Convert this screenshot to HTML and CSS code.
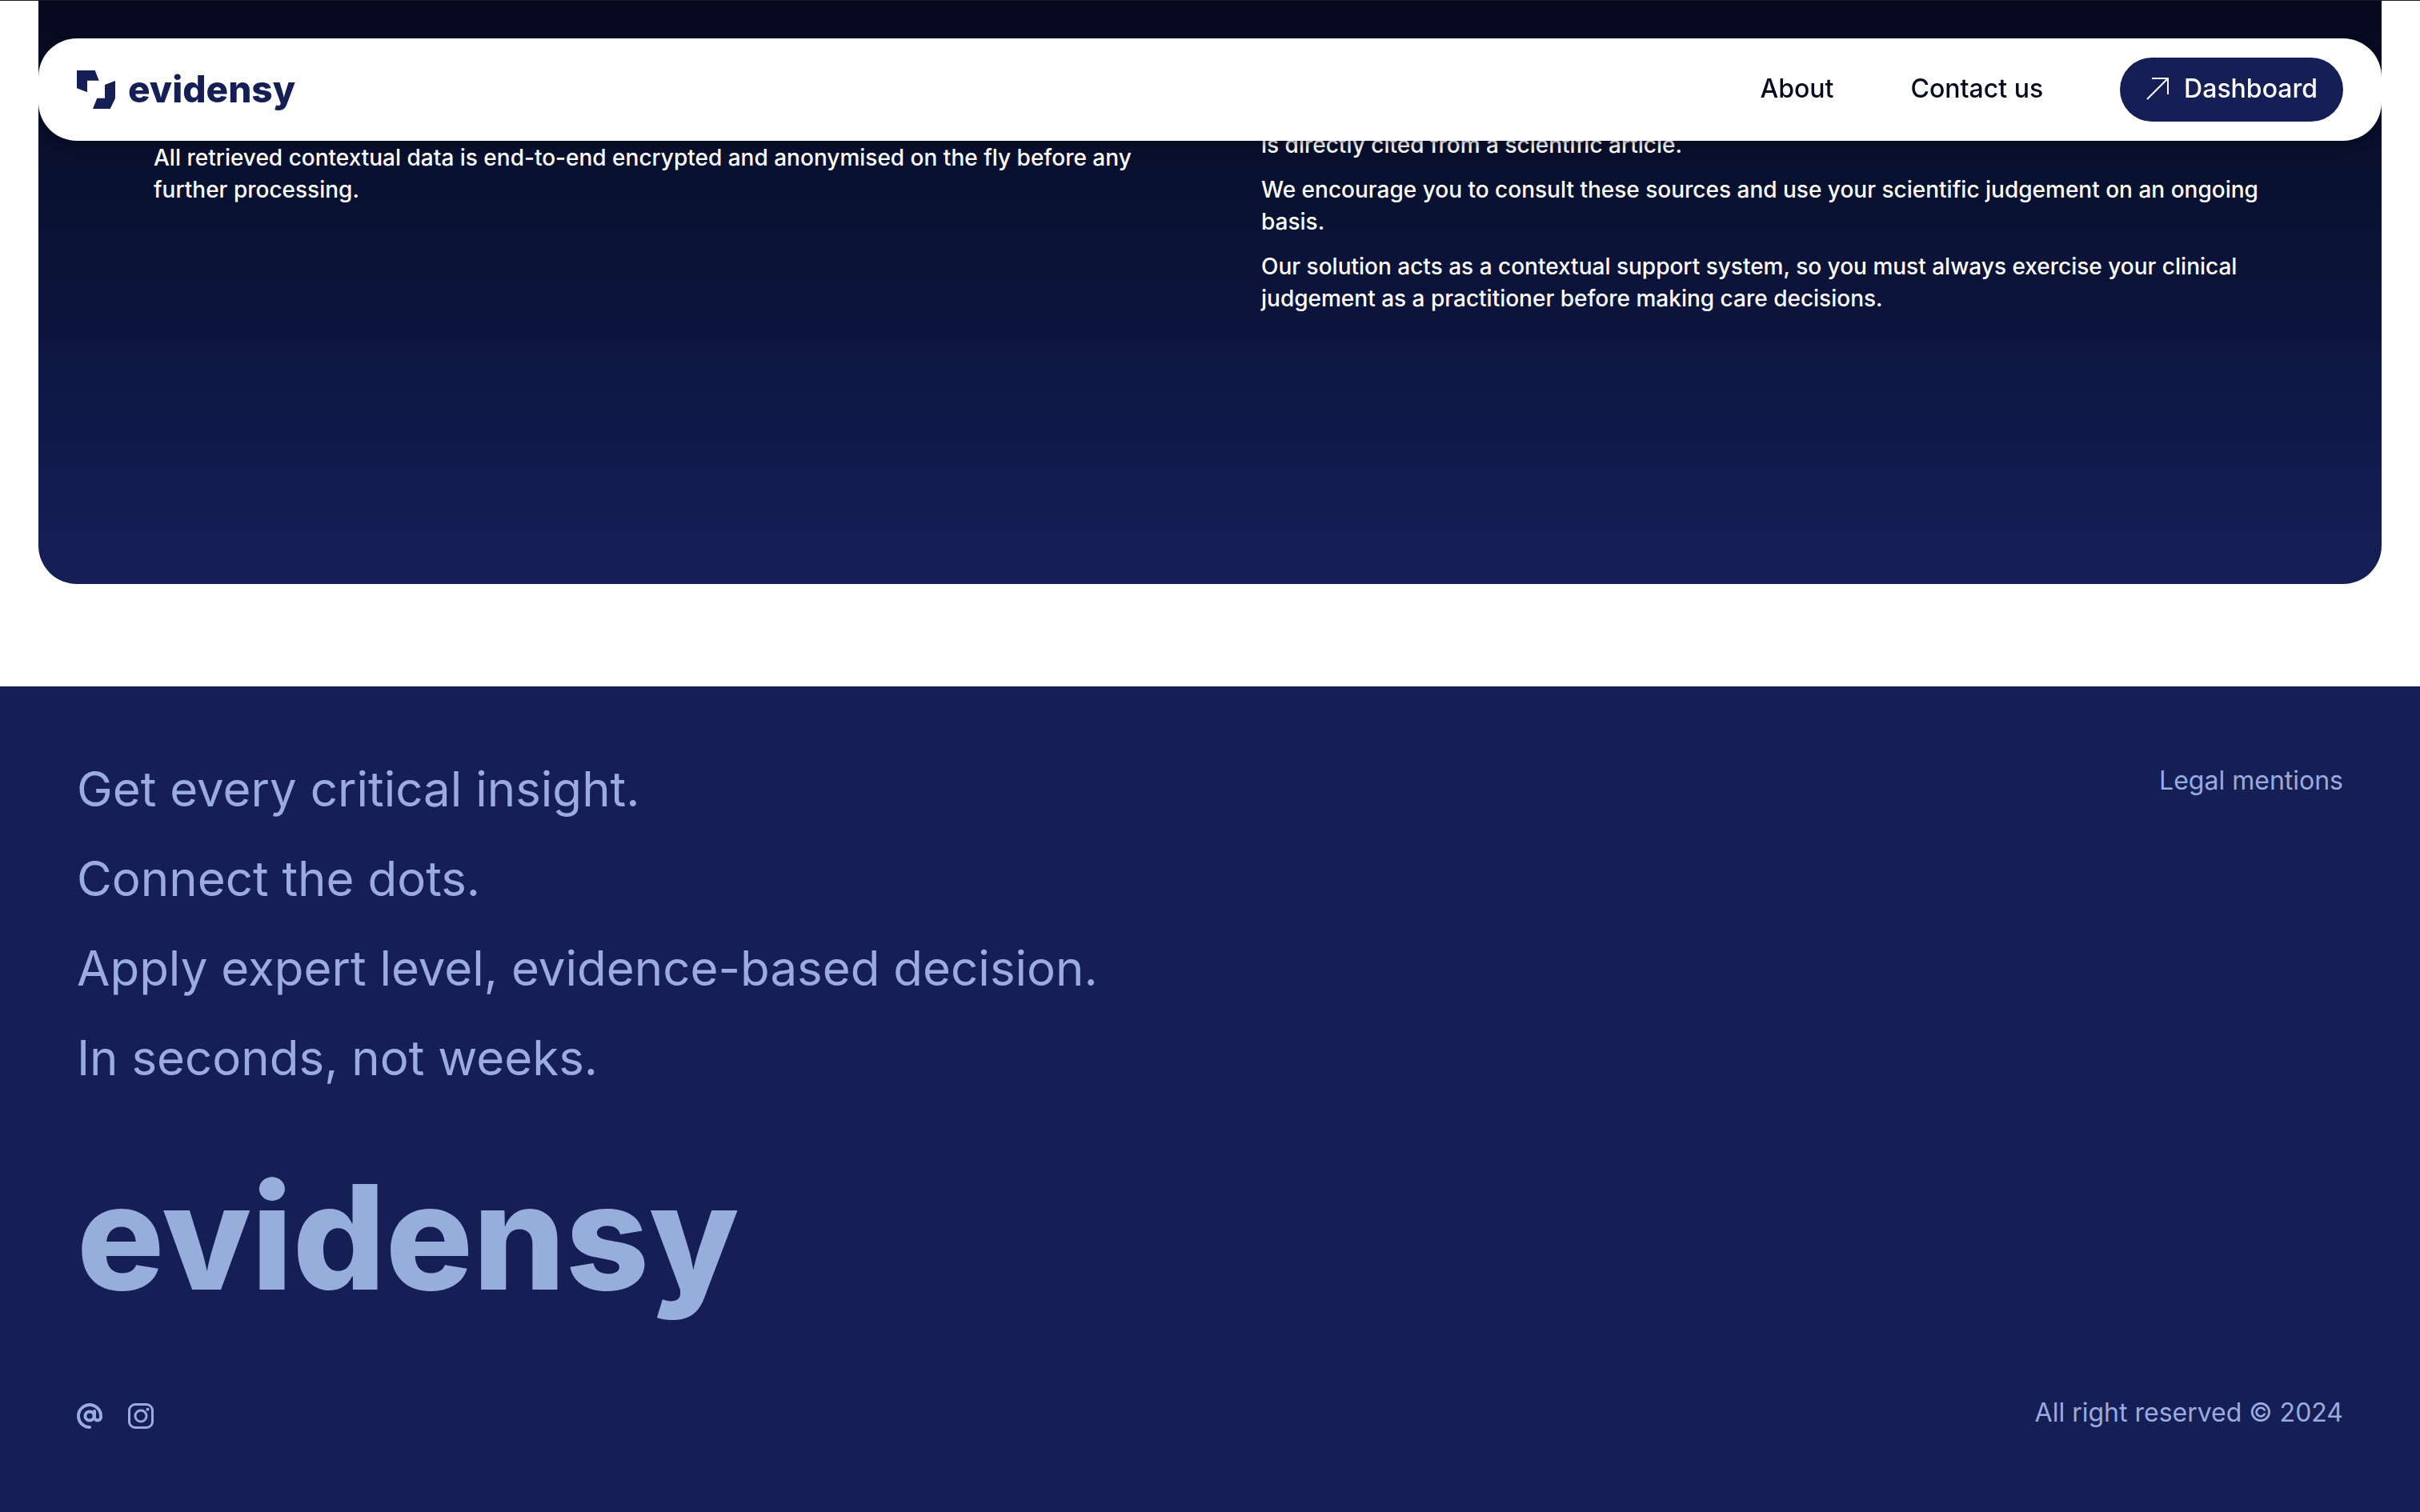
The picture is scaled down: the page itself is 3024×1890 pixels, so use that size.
FILE: index.html
```html
<!DOCTYPE html>
<html lang="en">
<head>
<meta charset="utf-8">
<title>evidensy</title>
<meta name="viewport" content="width=device-width, initial-scale=1">
<link rel="stylesheet" href="styles.css">
</head>
<body>
<header class="nav">
  <a class="brand" href="#">
    <svg class="brand-mark" viewBox="0 0 48 48" aria-hidden="true">
      <path d="M0 0H22.7L27.7 12.7H13V27.3L0 22.3Z"/>
      <path d="M48 13V35L41.7 48H20L25.3 34.8H35V18Z"/>
    </svg>
    <span>evidensy</span>
  </a>
  <nav class="nav-links">
    <a href="#">About</a>
    <a href="#">Contact us</a>
    <a class="dashboard" href="#">
      <svg class="arrow" viewBox="0 0 32 32" aria-hidden="true"><path d="M2 29L28 3M8 3H28V23"/></svg>
      <span>Dashboard</span>
    </a>
  </nav>
</header>
<main class="card">
  <section class="column column-data">
    <p>All retrieved contextual data is end-to-end encrypted and anonymised on the fly before any further processing.</p>
  </section>
  <section class="column">
    <p>is directly cited from a scientific article.</p>
    <p>We encourage you to consult these sources and use your scientific judgement on an ongoing basis.</p>
    <p>Our solution acts as a contextual support system, so you must always exercise your clinical judgement as a practitioner before making care decisions.</p>
  </section>
</main>
<footer class="footer">
  <div class="footer-top">
    <div class="slogans">
      <p>Get every critical insight.</p>
      <p>Connect the dots.</p>
      <p>Apply expert level, evidence-based decision.</p>
      <p>In seconds, not weeks.</p>
    </div>
    <a class="legal" href="#">Legal mentions</a>
  </div>
  <div class="wordmark">evidensy</div>
  <div class="footer-bottom">
    <div class="social">
      <a href="#" aria-label="Email">
        <svg viewBox="0 0 32 32" aria-hidden="true"><g stroke-width="4"><circle cx="16" cy="16" r="5.6"/><path d="M22 10V17.5A4 4 0 0 0 30 17.5V16A14 14 0 1 0 16 30"/></g></svg>
      </a>
      <a href="#" aria-label="Instagram">
        <svg viewBox="0 0 32 32" aria-hidden="true"><g stroke-width="3"><rect x="1.5" y="1.5" width="29" height="29" rx="7.5"/><circle cx="16" cy="16" r="7"/></g><circle class="dot" cx="24.5" cy="7.8" r="2"/></svg>
      </a>
    </div>
    <p>All right reserved © 2024</p>
  </div>
</footer>
</body>
</html>
```
FILE: styles.css
```css
* { box-sizing: border-box; }

body {
  margin: 0;
  min-height: 100vh;
  display: flex;
  flex-direction: column;
  border-top: 1px solid #1c1c24;
  background: #fff;
  color: #060a1f;
  font-family: Inter, "Liberation Sans", sans-serif;
  font-size: 32px;
}

p { margin: 0; }
a { color: inherit; text-decoration: none; }

.nav {
  position: fixed;
  top: 48px;
  left: 48px;
  right: 48px;
  z-index: 1;
  display: flex;
  align-items: center;
  justify-content: space-between;
  padding: 24px 48px;
  border-radius: 48px;
  background: #fff;
  box-shadow: 0 4px 12px rgba(12, 10, 18, 0.4);
  clip-path: inset(-48px 0 -48px 0);
}

.brand {
  display: flex;
  align-items: center;
  gap: 16px;
  color: #151f56;
  font-size: 46px;
  font-weight: 800;
  line-height: 48px;
}

.brand span { padding-bottom: 2px; }

.brand-mark { width: 48px; height: 48px; fill: currentColor; }

.nav-links {
  display: flex;
  align-items: center;
  gap: 96px;
  font-weight: 450;
  line-height: 78px;
}

.nav-links > a { padding-bottom: 2px; }

.nav-links > .dashboard {
  display: flex;
  align-items: center;
  gap: 16px;
  padding: 0 32px 2px;
  border-radius: 40px;
  background: #151f56;
  color: #fff;
}

.arrow {
  width: 32px;
  height: 32px;
  fill: none;
  stroke: currentColor;
  stroke-width: 2;
}

.card {
  display: grid;
  grid-template-columns: 1fr 1fr;
  gap: 128px;
  margin: 0 48px 128px;
  padding: 160px 144px 337px;
  border-radius: 0 0 48px 48px;
  background: linear-gradient(#06091e, #08102e 200px, #0d153f 420px, #121b4f 600px, #151f56 700px);
  color: #fff;
  font-size: 28px;
  font-weight: 450;
  line-height: 40px;
}

.column {
  display: flex;
  flex-direction: column;
  gap: 16px;
}

.column-data { padding-top: 16px; }

.footer {
  flex: 1;
  padding: 88px 96px 96px;
  background: #151f56;
  color: #9aabdf;
}

.footer-top {
  display: flex;
  justify-content: space-between;
}

.slogans {
  display: grid;
  gap: 32px;
  font-size: 60px;
  line-height: 80px;
}

.legal { line-height: 60px; }

.wordmark {
  margin-top: 84px;
  color: #97addc;
  font-size: 182px;
  font-weight: 800;
  line-height: 200px;
}

.footer-bottom {
  display: flex;
  align-items: flex-end;
  justify-content: space-between;
  margin-top: 92px;
  line-height: 52px;
}

.footer-bottom p { padding-top: 2px; }

.social {
  display: flex;
  gap: 32px;
  padding-bottom: 6px;
}

.social a { display: flex; }

.social svg {
  width: 32px;
  height: 32px;
  fill: none;
  stroke: currentColor;
  stroke-linecap: round;
}

.social .dot { fill: currentColor; stroke: none; }
```
